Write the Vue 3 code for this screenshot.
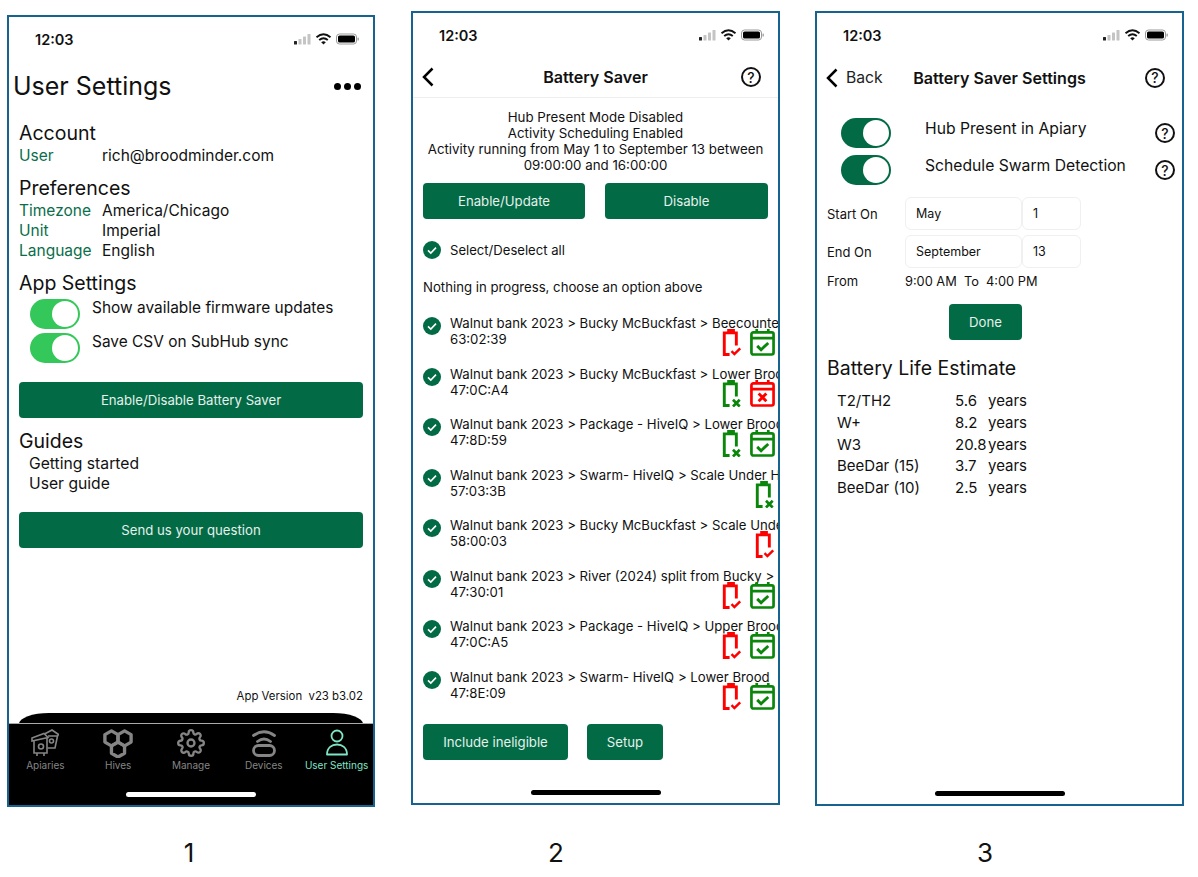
<template>
  <div class="page">
    <svg class="defs" aria-hidden="true">
      <symbol id="bat-check" viewBox="0 0 20 28">
        <rect x="5" y="0" width="8" height="4.5" fill="currentColor" />
        <path d="M14.5 17V4H2v22.500h5.500" fill="none" stroke="currentColor" stroke-width="3" />
        <path d="M9.500 23l3 3 6-6" fill="none" stroke="currentColor" stroke-width="2.600" />
      </symbol>
      <symbol id="bat-x" viewBox="0 0 20 28">
        <rect x="5" y="0" width="8" height="4.5" fill="currentColor" />
        <path d="M14.5 17V4H2v22.500h5.500" fill="none" stroke="currentColor" stroke-width="3" />
        <path d="M11 20.500l7 7M18 20.500l-7 7" fill="none" stroke="currentColor" stroke-width="2.800" />
      </symbol>
      <symbol id="cal-check" viewBox="0 0 26 28">
        <rect x="1.500" y="3.500" width="23" height="23" rx="2" fill="none" stroke="currentColor" stroke-width="2.800" />
        <path d="M1 9.500h24M7 0v4M19 0v4" fill="none" stroke="currentColor" stroke-width="2.800" />
        <path d="M7.500 17.500l4 4 7.500-7" fill="none" stroke="currentColor" stroke-width="3" />
      </symbol>
      <symbol id="cal-x" viewBox="0 0 26 28">
        <rect x="1.500" y="3.500" width="23" height="23" rx="2" fill="none" stroke="currentColor" stroke-width="2.800" />
        <path d="M1 9.500h24M7 0v4M19 0v4" fill="none" stroke="currentColor" stroke-width="2.800" />
        <path d="M9 14l8 8M17 14l-8 8" fill="none" stroke="currentColor" stroke-width="3" />
      </symbol>
      <symbol id="tick" viewBox="0 0 18 18">
        <circle cx="9" cy="9" r="9" fill="#026b45" />
        <path d="M5 9.300l2.800 2.700L13 6.600" fill="none" stroke="#fff" stroke-width="1.600" />
      </symbol>
      <symbol id="status" viewBox="0 0 65 12">
        <rect x="0" y="8" width="3" height="3.500" rx="0.500" fill="#222" />
        <rect x="4.500" y="6" width="3" height="5.500" rx="0.500" fill="#c4c4c4" />
        <rect x="9" y="3.500" width="3" height="8" rx="0.500" fill="#c4c4c4" />
        <rect x="13.500" y="1" width="3" height="10.500" rx="0.500" fill="#c4c4c4" />
        <path d="M22.500 4.200Q29.500-1.500 36.500 4.200M25.200 7Q29.500 3.500 33.800 7" fill="none" stroke="#111" stroke-width="1.900" />
        <path d="M29.500 11.500L27.200 9.200Q29.500 7.500 31.800 9.200z" fill="#111" />
        <rect x="42.500" y="1" width="20" height="10" rx="3" fill="none" stroke="#999" />
        <rect x="44" y="2.500" width="17" height="7" rx="1.600" fill="#000" />
        <rect x="63.500" y="4.500" width="1.300" height="3" rx="0.600" fill="#999" />
      </symbol>
      <symbol id="chevron" viewBox="0 0 12 20">
        <path d="M10.500 1.500L2 10l8.500 8.500" fill="none" stroke="#000" stroke-width="2.500" />
      </symbol>
    </svg>

    <!-- screen 1 -->
    <div class="col">
      <section class="phone phone-one">
        <div class="status">
          <span class="time">12:03</span>
          <svg class="status-icons"><use href="#status" /></svg>
        </div>
        <div class="title-row">
          <h1>User Settings</h1>
          <div class="dots"><i></i><i></i><i></i></div>
        </div>
        <div class="body">
          <h2 class="first">Account</h2>
          <div class="kv"><span>User</span><span>rich@broodminder.com</span></div>
          <h2>Preferences</h2>
          <div v-for="p in prefs" :key="p[0]" class="kv"><span>{{ p[0] }}</span><span>{{ p[1] }}</span></div>
          <h2>App Settings</h2>
          <div class="switches">
            <div v-for="s in appSwitches" :key="s" class="switch-row">
              <div class="toggle bright"><i></i></div>
              <span>{{ s }}</span>
            </div>
          </div>
          <button class="btn wide">Enable/Disable Battery Saver</button>
          <h2 class="guides">Guides</h2>
          <div class="guide">Getting started</div>
          <div class="guide">User guide</div>
          <button class="btn wide send">Send us your question</button>
        </div>
        <div class="version">App Version&nbsp; v23 b3.02</div>
        <div class="hump"></div>
        <nav class="tabs">
          <div class="tab-row">
            <div class="tab">
              <svg width="28" height="28" viewBox="0 0 28 28" fill="none" stroke="currentColor" stroke-width="1.600">
                <path d="M1 9l12-4.500 4 4L1 12z" />
                <path d="M3 11.500V24h13V9M6 24v3M13 24v3" />
                <circle cx="10" cy="17.500" r="2.500" />
                <path d="M13.500 5L21 1l6.500 4.500-1 1.500H17M26.500 7L24 19h-7.500" />
                <circle cx="20.500" cy="12" r="2" />
              </svg>
              <span>Apiaries</span>
            </div>
            <div class="tab">
              <svg width="30" height="29" viewBox="0 -1 30 31" fill="none" stroke="currentColor" stroke-width="3.600" stroke-linejoin="round">
                <path d="M8 1l7 4v8l-7 4-7-4V5z" />
                <path d="M22 1l7 4v8l-7 4-7-4V5z" />
                <path d="M15 13l7 4v8l-7 4-7-4v-8z" />
              </svg>
              <span class="tight">Hives</span>
            </div>
            <div class="tab">
              <svg width="28" height="28" viewBox="0 0 24 24" fill="none" stroke="currentColor" stroke-width="2">
                <circle cx="12" cy="12" r="3" />
                <path d="M19.4 15a1.65 1.65 0 0 0 .33 1.82l.06.06a2 2 0 0 1 0 2.83 2 2 0 0 1-2.83 0l-.06-.06a1.65 1.65 0 0 0-1.82-.33 1.65 1.65 0 0 0-1 1.51V21a2 2 0 0 1-2 2 2 2 0 0 1-2-2v-.09A1.65 1.65 0 0 0 9 19.4a1.65 1.65 0 0 0-1.82.33l-.06.06a2 2 0 0 1-2.83 0 2 2 0 0 1 0-2.83l.06-.06a1.65 1.65 0 0 0 .33-1.82 1.65 1.65 0 0 0-1.51-1H3a2 2 0 0 1-2-2 2 2 0 0 1 2-2h.09A1.65 1.65 0 0 0 4.600 9a1.65 1.65 0 0 0-.33-1.82l-.06-.06a2 2 0 0 1 0-2.83 2 2 0 0 1 2.83 0l.06.06a1.65 1.65 0 0 0 1.82.33H9a1.65 1.65 0 0 0 1-1.51V3a2 2 0 0 1 2-2 2 2 0 0 1 2 2v.09a1.65 1.65 0 0 0 1 1.51 1.65 1.65 0 0 0 1.82-.33l.06-.06a2 2 0 0 1 2.83 0 2 2 0 0 1 0 2.83l-.06.06a1.65 1.65 0 0 0-.33 1.82V9a1.65 1.65 0 0 0 1.51 1H21a2 2 0 0 1 2 2 2 2 0 0 1-2 2h-.09a1.65 1.65 0 0 0-1.51 1z" />
              </svg>
              <span>Manage</span>
            </div>
            <div class="tab">
              <svg width="24" height="28" viewBox="0 0 24 28" fill="none" stroke="currentColor" stroke-width="2.800" stroke-linecap="round">
                <rect x="1.500" y="16.500" width="21" height="10" rx="5" />
                <path d="M1.500 6.500Q12-1 22.500 6.500M5.500 12.500Q12 7.500 18.500 12.500" />
              </svg>
              <span>Devices</span>
            </div>
            <div class="tab active">
              <svg width="24" height="28" viewBox="0 0 24 28" fill="none" stroke="currentColor" stroke-width="1.800">
                <circle cx="12" cy="7" r="5.500" />
                <path d="M2 25.500c0-7 5-10 10-10s10 3 10 10z" stroke-linejoin="round" />
              </svg>
              <span>User Settings</span>
            </div>
          </div>
          <div class="home light"></div>
        </nav>
      </section>
      <div class="caption cap-one">1</div>
    </div>

    <!-- screen 2 -->
    <div class="col">
      <section class="phone phone-two">
        <div class="status">
          <span class="time">12:03</span>
          <svg class="status-icons"><use href="#status" /></svg>
        </div>
        <header class="nav lined">
          <svg class="chev"><use href="#chevron" /></svg>
          <span class="nav-title">Battery Saver</span>
          <span class="help nav-help">?</span>
        </header>
        <div class="info">
          <div>Hub Present Mode Disabled</div>
          <div>Activity Scheduling Enabled</div>
          <div>Activity running from May 1 to September 13 between</div>
          <div>09:00:00 and 16:00:00</div>
        </div>
        <div class="two-btns">
          <button class="btn half first-half">Enable/Update</button>
          <button class="btn half">Disable</button>
        </div>
        <div class="select-all">
          <svg class="tick"><use href="#tick" /></svg>
          <span>Select/Deselect all</span>
        </div>
        <div class="nothing">Nothing in progress, choose an option above</div>
        <div class="list">
          <div v-for="r in rows" :key="r.id" class="row">
            <svg class="tick"><use href="#tick" /></svg>
            <div class="row-text">
              <div class="row-name">{{ r.name }}</div>
              <div class="row-second">
                <span>{{ r.id }}</span>
                <div class="row-icons">
                  <svg class="bat" :class="r.batColor"><use :href="'#' + r.bat" /></svg>
                  <svg v-if="r.cal" class="cal" :class="r.calColor"><use :href="'#' + r.cal" /></svg>
                </div>
              </div>
            </div>
          </div>
        </div>
        <div class="bottom-btns">
          <button class="btn include">Include ineligible</button>
          <button class="btn setup">Setup</button>
        </div>
        <div class="home dark"></div>
      </section>
      <div class="caption cap-two">2</div>
    </div>

    <!-- screen 3 -->
    <div class="col">
      <section class="phone phone-three">
        <div class="status">
          <span class="time">12:03</span>
          <svg class="status-icons"><use href="#status" /></svg>
        </div>
        <header class="nav">
          <svg class="chev"><use href="#chevron" /></svg>
          <span class="back">Back</span>
          <span class="nav-title">Battery Saver Settings</span>
          <span class="help nav-help">?</span>
        </header>
        <div class="setting-list">
          <div v-for="s in saverSwitches" :key="s" class="setting">
            <div class="toggle deep"><i></i></div>
            <span class="setting-label">{{ s }}</span>
            <span class="help setting-help">?</span>
          </div>
        </div>
        <div class="dates">
          <span>Start On</span>
          <div class="field">May</div>
          <div class="field">1</div>
          <span>End On</span>
          <div class="field">September</div>
          <div class="field">13</div>
        </div>
        <div class="from">
          <span>From</span>
          <span class="from-time">9:00 AM&nbsp; To&nbsp; 4:00 PM</span>
        </div>
        <button class="btn done">Done</button>
        <h2 class="estimate">Battery Life Estimate</h2>
        <div class="life">
          <template v-for="l in life" :key="l[0]">
            <span>{{ l[0] }}</span>
            <span>{{ l[1] }}</span>
            <span>years</span>
          </template>
        </div>
        <div class="home dark"></div>
      </section>
      <div class="caption cap-three">3</div>
    </div>
  </div>
</template>

<script setup>
const prefs = [
  ['Timezone', 'America/Chicago'],
  ['Unit', 'Imperial'],
  ['Language', 'English'],
]

const appSwitches = ['Show available firmware updates', 'Save CSV on SubHub sync']
const saverSwitches = ['Hub Present in Apiary', 'Schedule Swarm Detection']

const rows = [
  { name: 'Walnut bank 2023 > Bucky McBuckfast > Beecounter', id: '63:02:39', bat: 'bat-check', batColor: 'red', cal: 'cal-check', calColor: 'green' },
  { name: 'Walnut bank 2023 > Bucky McBuckfast > Lower Brood', id: '47:0C:A4', bat: 'bat-x', batColor: 'green', cal: 'cal-x', calColor: 'red' },
  { name: 'Walnut bank 2023 > Package - HiveIQ > Lower Brood', id: '47:8D:59', bat: 'bat-x', batColor: 'green', cal: 'cal-check', calColor: 'green' },
  { name: 'Walnut bank 2023 > Swarm- HiveIQ > Scale Under Hive', id: '57:03:3B', bat: 'bat-x', batColor: 'green' },
  { name: 'Walnut bank 2023 > Bucky McBuckfast > Scale Under Hive', id: '58:00:03', bat: 'bat-check', batColor: 'red' },
  { name: 'Walnut bank 2023 > River (2024) split from Bucky > Upper Brood', id: '47:30:01', bat: 'bat-check', batColor: 'red', cal: 'cal-check', calColor: 'green' },
  { name: 'Walnut bank 2023 > Package - HiveIQ > Upper Brood', id: '47:0C:A5', bat: 'bat-check', batColor: 'red', cal: 'cal-check', calColor: 'green' },
  { name: 'Walnut bank 2023 > Swarm- HiveIQ > Lower Brood', id: '47:8E:09', bat: 'bat-check', batColor: 'red', cal: 'cal-check', calColor: 'green' },
]

const life = [
  ['T2/TH2', '5.6'],
  ['W+', '8.2'],
  ['W3', '20.8'],
  ['BeeDar (15)', '3.7'],
  ['BeeDar (10)', '2.5'],
]
</script>

<style scoped>
* {
  box-sizing: border-box;
}

.page {
  display: flex;
  width: 1198px;
  height: 877px;
  padding-left: 7px;
  font-family: Inter, "Liberation Sans", sans-serif;
  color: #111;
  background: #fff;
  overflow: hidden;
}

.defs {
  position: absolute;
  width: 0;
  height: 0;
}

.col {
  display: flex;
  flex-direction: column;
  height: 877px;
}

.phone {
  display: flex;
  flex-direction: column;
  border: 2px solid #17638f;
  background: #fff;
  overflow: hidden;
}

.phone-one {
  width: 368px;
  height: 792px;
  margin-top: 15px;
  margin-right: 36px;
}

.phone-two {
  width: 369px;
  height: 794px;
  margin-top: 11px;
  margin-right: 35px;
}

.phone-three {
  width: 369px;
  height: 795px;
  margin-top: 11px;
}

.caption {
  width: 30px;
  margin-top: auto;
  margin-bottom: 9px;
  font-size: 26px;
  line-height: 30px;
  text-align: center;
}

.cap-one { margin-left: 167px; }
.cap-two { margin-left: 130px; }
.cap-three { margin-left: 155px; }

.status {
  display: flex;
  flex: none;
  align-items: center;
  justify-content: space-between;
  height: 44px;
  padding: 0 14px 0 26px;
}

.time {
  font-size: 14.500px;
  font-weight: 600;
}

.status-icons {
  width: 65px;
  height: 12px;
}

/* screen 1 */
.title-row {
  display: flex;
  align-items: center;
  justify-content: space-between;
  height: 32px;
  margin-top: 9px;
  padding: 0 12px 0 4px;
}

h1 {
  margin: 0;
  font-size: 25px;
  font-weight: 400;
}

.dots {
  display: flex;
  gap: 3px;
}

.dots i {
  width: 7px;
  height: 7px;
  border-radius: 50%;
  background: #000;
}

.body {
  padding: 0 10px;
}

h2 {
  margin: 11px 0 0;
  font-size: 19.500px;
  font-weight: 400;
  line-height: 24px;
}

h2.first {
  margin-top: 19px;
}

.kv {
  display: flex;
  height: 20px;
  font-size: 15.500px;
  line-height: 22px;
}

.kv span:first-child {
  width: 83px;
  color: #0a6e4a;
}

.switches {
  display: flex;
  flex-direction: column;
  gap: 4px;
  margin-top: 4px;
  padding-left: 11px;
}

.switch-row {
  display: flex;
  gap: 12px;
  font-size: 15.450px;
  line-height: 18px;
}

.toggle {
  flex: none;
  display: flex;
  justify-content: flex-end;
  width: 50px;
  height: 30px;
  padding: 2px;
  border-radius: 15px;
}

.toggle i {
  width: 26px;
  height: 26px;
  border-radius: 50%;
  background: #fff;
}

.bright {
  background: #34c759;
}

.deep {
  background: #026b45;
}

.btn {
  display: block;
  height: 36px;
  padding: 0;
  border: 0;
  border-radius: 4px;
  background: #026b45;
  color: #e6f0ec;
  font-family: inherit;
  font-size: 13.200px;
}

.wide {
  width: 344px;
  margin-top: 19px;
}

.guides {
  margin-top: 11px;
}

.guide {
  height: 20px;
  padding-left: 10px;
  font-size: 15.700px;
  line-height: 22px;
}

.version {
  margin-top: auto;
  padding: 0 10px 10px 0;
  font-size: 11.400px;
  line-height: 14px;
  text-align: right;
}

.hump {
  flex: none;
  height: 11px;
  margin: 0 10px;
  border-radius: 30px 30px 0 0 / 11px 11px 0 0;
  background: #000;
}

.tabs {
  display: flex;
  flex: none;
  flex-direction: column;
  height: 81px;
  padding-top: 5px;
  background: #000;
  box-shadow: 0 -1px 0 #aaa;
}

.tab-row {
  display: flex;
}

.tab {
  display: flex;
  flex: 1;
  flex-direction: column;
  align-items: center;
  color: #858585;
}

.tab span {
  margin-top: 2px;
  font-size: 10px;
  line-height: 12px;
  white-space: nowrap;
}

.tab span.tight {
  margin-top: 1px;
}

.tab.active {
  color: #7fe5c5;
}

.home {
  flex: none;
  width: 130px;
  height: 5px;
  border-radius: 3px;
}

.light {
  align-self: center;
  margin-top: auto;
  margin-bottom: 8px;
  background: #fff;
}

.dark {
  align-self: center;
  margin-top: auto;
  margin-bottom: 8px;
  background: #000;
}

/* screen 2 */
.nav {
  display: flex;
  flex: none;
  position: relative;
  align-items: center;
  height: 41px;
  padding-left: 9px;
}

.lined {
  border-bottom: 1px solid #eee;
}

.chev {
  width: 12px;
  height: 20px;
}

.nav-title {
  position: absolute;
  left: 0;
  right: 0;
  font-size: 16.100px;
  font-weight: 600;
  text-align: center;
}

.help {
  display: flex;
  flex: none;
  align-items: center;
  justify-content: center;
  width: 20px;
  height: 20px;
  border: 2px solid #111;
  border-radius: 50%;
  font-size: 14px;
  font-weight: 500;
}

.nav-help {
  position: absolute;
  right: 17px;
}

.info {
  margin-top: 11px;
  font-size: 13.300px;
  line-height: 16px;
  text-align: center;
}

.two-btns {
  display: flex;
  gap: 20px;
  margin-top: 10px;
  padding-left: 10px;
}

.half {
  width: 163px;
}

.first-half {
  width: 162px;
}

.select-all {
  display: flex;
  align-items: center;
  gap: 9px;
  height: 18px;
  margin-top: 22px;
  padding-left: 10px;
  font-size: 13.100px;
}

.tick {
  flex: none;
  width: 18px;
  height: 18px;
}

.nothing {
  margin-top: 20px;
  padding-left: 10px;
  font-size: 13.200px;
  line-height: 16px;
}

.list {
  margin-top: 20.200px;
}

.row {
  display: flex;
  gap: 9px;
  height: 50.500px;
  padding-left: 10px;
}

.row .tick {
  margin-top: 2px;
}

.row-text {
  flex: 1;
  min-width: 0;
  font-size: 13.200px;
  line-height: 16px;
}

.row-name {
  overflow: hidden;
  white-space: nowrap;
}

.row-second {
  display: flex;
  justify-content: space-between;
  padding-right: 3px;
}

.row-icons {
  display: flex;
  gap: 8px;
  margin-top: -2px;
}

.bat {
  width: 20px;
  height: 27px;
}

.cal {
  width: 25px;
  height: 27px;
}

.red {
  color: #f00;
}

.green {
  color: #0a860a;
}

.bottom-btns {
  display: flex;
  gap: 19px;
  margin-top: 5.300px;
  padding-left: 10px;
}

.include {
  width: 145px;
}

.setup {
  width: 76px;
}

/* screen 3 */
.back {
  margin-left: 8px;
  font-size: 15.700px;
  color: #222;
}

.setting-list {
  display: flex;
  flex-direction: column;
  gap: 7px;
  margin-top: 20px;
  padding: 0 7px 0 24px;
}

.setting {
  display: flex;
  align-items: flex-start;
  height: 30px;
}

.setting-label {
  margin-left: 34px;
  font-size: 15.700px;
  line-height: 22px;
}

.setting-help {
  margin-top: 5px;
  margin-left: auto;
}

.dates {
  display: grid;
  grid-template-columns: 78px 117px 59px;
  grid-auto-rows: 33px;
  row-gap: 5px;
  align-items: center;
  margin-top: 12px;
  padding-left: 10px;
  font-size: 13px;
}

.field {
  display: flex;
  align-items: center;
  height: 33px;
  padding-left: 10px;
  border: 1px solid #f0f0f0;
  border-radius: 6px;
  font-size: 12.500px;
}

.from {
  display: grid;
  grid-template-columns: 78px auto;
  margin-top: 5px;
  padding-left: 10px;
  font-size: 13px;
  line-height: 17px;
  height: 16px;
}

.from-time {
  font-size: 12.800px;
}

.done {
  flex: none;
  width: 73px;
  margin-top: 15px;
  margin-left: 132px;
}

.estimate {
  margin-top: 16px;
  padding-left: 10px;
}

.life {
  display: grid;
  grid-template-columns: 118px 33px auto;
  grid-auto-rows: 21.700px;
  align-items: center;
  margin-top: 10px;
  padding-left: 20px;
  font-size: 15px;
}
</style>

<style>
body {
  margin: 0;
}
</style>
